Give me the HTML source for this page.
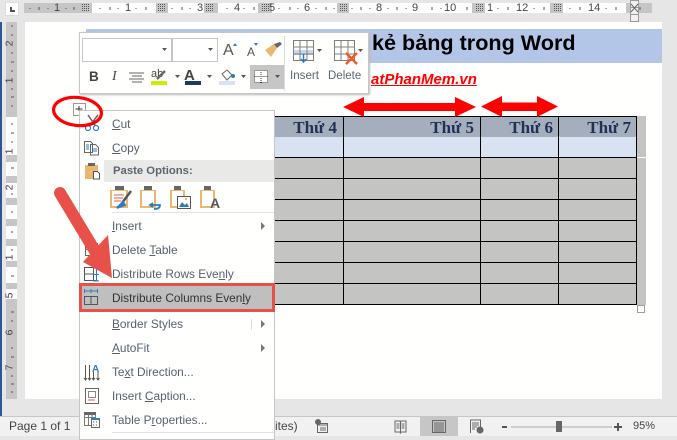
<!DOCTYPE html>
<html><head><meta charset="utf-8">
<style>
html,body{margin:0;padding:0}
body{width:677px;height:436px;position:relative;overflow:hidden;background:#e6e6e6;font-family:"Liberation Sans",sans-serif}
.a{position:absolute}
.t{position:absolute;white-space:nowrap;font-size:11.85px;line-height:14px;color:#566170}
.t u{text-decoration-thickness:1px;text-underline-offset:1px}
.th{position:absolute;top:117px;height:20px;font:bold 17px/22px "Liberation Serif",serif;color:#1f3157;text-align:right;white-space:nowrap}
.rn{position:absolute;top:3px;font-size:11px;line-height:11px;color:#444}
.rv{position:absolute;left:7px;font-size:10.500px;line-height:11px;color:#444;transform:rotate(-90deg)}
svg{position:absolute;left:0;top:0}
</style></head><body>
<!-- page -->
<div class="a" style="left:25px;top:22px;width:637px;height:377px;background:#fffffd"></div>
<div class="a" style="left:86px;top:29px;width:576px;height:34px;background:#b4c6e7"></div>
<div class="a" style="left:372px;top:28px;font:bold 21.6px/30px 'Liberation Sans',sans-serif;color:#000;white-space:nowrap">kẻ bảng trong Word</div>
<div class="a" style="left:371px;top:71px;font:italic bold 15px/18px 'Liberation Sans',sans-serif;color:#f00;text-decoration:underline;white-space:nowrap">atPhanMem.vn</div>
<!-- ruler top -->
<div class="a" style="left:5px;top:2px;width:14px;height:14px;background:#fff;border:1px solid #dcdcdc;box-sizing:border-box"></div>
<div class="a" style="left:10px;top:7px;width:5px;height:5px;border-left:2px solid #555;border-bottom:2px solid #555;box-sizing:border-box"></div>
<div class="a" style="left:24px;top:3px;width:628px;height:10px;background:#fff"></div>
<div class="a" style="left:24px;top:3px;width:68px;height:10px;background:#c6c6c6"></div>
<div class="a" style="left:156px;top:3px;width:12px;height:10px;background:#c6c6c6"></div>
<div class="a" style="left:204px;top:3px;width:14px;height:10px;background:#c6c6c6"></div>
<div class="a" style="left:258px;top:3px;width:14px;height:10px;background:#c6c6c6"></div>
<div class="a" style="left:337px;top:3px;width:12px;height:10px;background:#c6c6c6"></div>
<div class="a" style="left:472px;top:3px;width:13px;height:10px;background:#c6c6c6"></div>
<div class="a" style="left:550px;top:3px;width:13px;height:10px;background:#c6c6c6"></div>
<div class="a" style="left:626px;top:3px;width:26px;height:10px;background:#c6c6c6"></div>
<span class="rn" style="left:54px">1</span><span class="rn" style="left:125px">1</span><span class="rn" style="left:197px">3</span>
<span class="rn" style="left:234px">4</span><span class="rn" style="left:269px">5</span><span class="rn" style="left:304px">6</span><span class="rn" style="left:376px">8</span><span class="rn" style="left:412px">9</span>
<span class="rn" style="left:444px">10</span><span class="rn" style="left:487px">1</span><span class="rn" style="left:516px">12</span><span class="rn" style="left:588px">14</span>
<svg width="677" height="436" viewBox="0 0 677 436">
<defs><pattern id="g" width="2" height="2" patternUnits="userSpaceOnUse"><rect width="2" height="2" fill="#c6c6c6"/><rect width="1" height="1" fill="#555"/></pattern></defs>
<g fill="url(#g)"><rect x="82" y="4" width="8" height="8"/><rect x="158" y="4" width="8" height="8"/><rect x="206" y="4" width="8" height="8"/><rect x="261" y="4" width="8" height="8"/><rect x="339" y="4" width="8" height="8"/><rect x="475" y="4" width="8" height="8"/><rect x="553" y="4" width="8" height="8"/></g>
<path d="M30 8v1M39 7v3M48 8v1M66 8v1M74 7v3M100 8v1M110 7v3M118 8v1M136 8v1M146 7v3M172 8v1M182 7v3M190 8v1M227 8v1M244 8v1M254 7v3M279 8v1M290 7v3M298 8v1M316 8v1M326 7v3M334 8v1M352 8v1M361 7v3M370 8v1M388 8v1M397 7v3M406 8v1M432 7v3M441 8v1M467 7v3M498 8v1M508 7v3M534 8v1M544 7v3M570 8v1M580 7v3M606 8v1M616 7v3M640 7v3" stroke="#555" fill="none"/>
<rect x="630.500" y="0.500" width="8" height="7" fill="#f2f2f2" stroke="#999"/>
<rect x="630.500" y="7.500" width="8" height="7" fill="#f2f2f2" stroke="#999"/><rect x="630.500" y="14.500" width="8" height="7" fill="#f2f2f2" stroke="#999"/>
<path d="M631 4l7 8M638 4l-7 8" stroke="#666" fill="none"/>
</svg>
<!-- left ruler -->
<div class="a" style="left:6px;top:22px;width:11px;height:377px;background:#fff"></div>
<div class="a" style="left:6px;top:22px;width:11px;height:95px;background:#c6c6c6"></div>
<div class="a" style="left:6px;top:155px;width:11px;height:7px;background:#c6c6c6"></div>
<div class="a" style="left:6px;top:176px;width:11px;height:7px;background:#c6c6c6"></div>
<div class="a" style="left:6px;top:198px;width:11px;height:7px;background:#c6c6c6"></div>
<div class="a" style="left:6px;top:219px;width:11px;height:7px;background:#c6c6c6"></div>
<div class="a" style="left:6px;top:239px;width:11px;height:7px;background:#c6c6c6"></div>
<div class="a" style="left:6px;top:261px;width:11px;height:6px;background:#c6c6c6"></div>
<div class="a" style="left:6px;top:283px;width:11px;height:6px;background:#c6c6c6"></div>
<div class="a" style="left:6px;top:299px;width:11px;height:100px;background:#c6c6c6"></div>
<div class="a" style="left:0;top:22px;width:2px;height:394px;background:#2b579a"></div>
<svg width="677" height="436" viewBox="0 0 677 436">
<path d="M11 26h2M11 35h2M11 53h2M11 62h3M11 71h2M11 89h2M11 97h3M11 106h2M11 124h2M11 133h3M11 142h2M11 168h3M11 194h2M11 212h2M11 232h2M11 250h2M11 276h3M11 312h3M11 321h2M11 348h2M11 357h3M11 376h2M11 384h3M11 392h2" stroke="#555"/>
</svg>
<span class="rv" style="left:7px;top:38px">2</span>
<span class="rv" style="top:75px">1</span>
<span class="rv" style="top:146px">1</span>
<span class="rv" style="top:182px">2</span>
<span class="rv" style="top:252px">1</span>
<span class="rv" style="top:290px">5</span>
<span class="rv" style="top:327px">6</span>
<span class="rv" style="top:362px">7</span>
<!-- table -->
<div class="a" style="left:270px;top:116px;width:376px;height:189px;background:#c4c4c2"></div>
<div class="a" style="left:270px;top:117px;width:367px;height:20px;background:#a5aebd"></div>
<div class="a" style="left:270px;top:137px;width:367px;height:20px;background:#d9e2f3"></div>
<svg width="677" height="436" viewBox="0 0 677 436">
<path d="M270 116.500H637M270 157.500H637M270 178.500H637M270 199.500H637M270 220.500H637M270 241.500H637M270 262.500H637M270 283.500H637M270 304.500H637M343.500 116V305M480.500 116V305M558.500 116V305M636.500 116V305" stroke="#000" fill="none"/>
<path d="M637 157.500h9" stroke="#fffffd"/>
<rect x="637.500" y="305.500" width="7" height="7" fill="#fffffd" stroke="#a0a0a0"/>
<!-- arrows -->
<path d="M343 107L364 97V103H455V97L476 107 455 117V111H364V117Z" fill="#f00"/>
<path d="M481 106.500L502 96V102.500H537V96L558 106.500 537 117V111H502V117Z" fill="#f00"/>
</svg>
<div class="th" style="left:270px;width:67px">Thứ 4</div>
<div class="th" style="left:345px;width:129px">Thứ 5</div>
<div class="th" style="left:482px;width:71px">Thứ 6</div>
<div class="th" style="left:560px;width:71px">Thứ 7</div>
<!-- status bar -->
<div class="a" style="left:0;top:416px;width:677px;height:20px;background:#f1f1f1;border-top:1px solid #c6c6c6;box-sizing:border-box"></div>
<div class="a" style="left:420px;top:417px;width:38px;height:19px;background:#c6c6c6"></div>
<div class="t" style="left:9px;top:419px;color:#444;font-size:12px">Page 1 of 1</div>
<div class="t" style="left:275px;top:419px;color:#444;font-size:12px">ites)</div>
<div class="t" style="left:633px;top:419px;color:#444;font-size:11px">95%</div>
<svg width="677" height="436" viewBox="0 0 677 436">
<g fill="none" stroke="#666">
<rect x="317.500" y="423.500" width="10" height="9"/><path d="M317 425h11M320 428h6M320 430h6"/>
<circle cx="318" cy="422" r="2.500" fill="#666"/>
<path d="M395 421h5l.5 1 .5-1h5v11h-5l-.5 1-.5-1h-5zM400.500 422v10M396.500 424h3M396.500 426h3M396.500 428h3M401.500 424h3M401.500 426h3M401.500 428h3"/>
<rect x="432.500" y="420.500" width="13" height="12"/><path d="M434 423h10M434 425h10M434 427h10M434 429h10M434 431h10"/>
<path d="M470.500 433v-13h10v7M472 423h7M472 425h7M472 427h5M472 429h3"/><circle cx="480" cy="430" r="3" fill="#666"/>
</g>
<path d="M502 427h5" stroke="#555" stroke-width="2"/><path d="M511 427h101" stroke="#aaa"/>
<rect x="556" y="421" width="6" height="11" fill="#666"/>
<path d="M614 427h8M618 423v8" stroke="#555" stroke-width="2"/>
<!-- table move handle (under menu) -->
<rect x="73.500" y="103.500" width="12" height="12" fill="#fffffd" stroke="#999"/>
<path d="M75.500 109h7M79 106v5" stroke="#333"/>
</svg>
<!-- menu -->
<div class="a" style="left:79px;top:110px;width:196px;height:330px;background:#fffffd;border:1px solid #c6c6c6;box-sizing:border-box"></div>
<div class="a" style="left:104px;top:160px;width:170px;height:22px;background:#e9e9e7"></div>
<div class="a" style="left:112px;top:212px;width:162px;height:1px;background:#dfe3e8"></div>
<div class="a" style="left:112px;top:432px;width:162px;height:1px;background:#dfe3e8"></div>
<div class="a" style="left:79px;top:283px;width:196px;height:29px;background:#bfbfbf;border:3px solid #e8504a;box-sizing:border-box"></div>
<div class="t" style="left:112px;top:117px"><u>C</u>ut</div>
<div class="t" style="left:112px;top:141px"><u>C</u>opy</div>
<div class="t" style="left:113px;top:164px;font-weight:bold;font-size:11.300px;color:#5d6570">Paste Options:</div>
<div class="t" style="left:112px;top:219px"><u>I</u>nsert</div>
<div class="t" style="left:112px;top:243px">Delete <u>T</u>able</div>
<div class="t" style="left:112px;top:267px">Distribute Rows Eve<u>n</u>ly</div>
<div class="t" style="left:112px;top:291px;color:#333">Distribute Columns Even<u>l</u>y</div>
<div class="t" style="left:112px;top:317px"><u>B</u>order Styles</div>
<div class="t" style="left:112px;top:341px"><u>A</u>utoFit</div>
<div class="t" style="left:112px;top:365px">Te<u>x</u>t Direction...</div>
<div class="t" style="left:112px;top:389px">Insert <u>C</u>aption...</div>
<div class="t" style="left:112px;top:413px">Table P<u>r</u>operties...</div>
<svg width="677" height="436" viewBox="0 0 677 436">
<!-- submenu arrows -->
<path d="M261 222l4 4-4 4zM261 320l4 4-4 4zM261 344l4 4-4 4z" fill="#777"/>
<path d="M251.500 319v11" stroke="#ddd"/>
<!-- cut -->
<path d="M88 115l9 13M98 115l-10 13" stroke="#666" fill="none" stroke-width="1.500"/>
<circle cx="88" cy="128" r="2.500" fill="#fffffd" stroke="#2f7bc0" stroke-width="1.200"/><circle cx="96" cy="128" r="2.500" fill="#fffffd" stroke="#2f7bc0" stroke-width="1.200"/>
<!-- copy -->
<path d="M84.500 141.500h6l2 2v9h-8zM90.500 144.500h5l3 3v7.500h-8z" fill="#fffffd" stroke="#666"/><path d="M86 145h3M86 147h3M86 149h3M92 149h5M92 151h5" stroke="#2f7bc0"/>
<!-- paste -->
<path d="M85 165h13v14H85z" fill="#e8b870"/><rect x="88" y="163" width="7" height="3" fill="#666"/>
<path d="M93.500 171.500h4l2 2v5.500h-6z" fill="#fffffd" stroke="#555"/>
<!-- paste option icons -->
<g>
<path d="M110 190h18v18h-18z" fill="#e8b870"/><rect x="112" y="191" width="14" height="15" fill="#fffffd"/><rect x="115" y="186" width="9" height="4" fill="#666"/>
<path d="M114 195h10M114 198h9M114 201h7" stroke="#e2584a"/>
<path d="M131 191l-9 12" stroke="#555" stroke-width="2.500"/><path d="M117 208l6-6 2 3z" fill="#2f7bc0" stroke="#2f7bc0" stroke-width="2"/>
<path d="M140 190h16v18h-16z" fill="#e8b870"/><rect x="142" y="191" width="12" height="15" fill="#fffffd"/><rect x="144" y="186" width="8" height="4" fill="#666"/>
<path d="M150 205h10q0 4-6 4M153 203l-3 2 3 2" fill="none" stroke="#2f7bc0" stroke-width="1.800"/>
<path d="M170 190h15v18h-15z" fill="#e8b870"/><rect x="172" y="191" width="11" height="15" fill="#fffffd"/><rect x="174" y="186" width="7" height="4" fill="#666"/>
<rect x="177.500" y="196.500" width="13" height="12" fill="#fffffd" stroke="#555"/><path d="M179 207l3-5 3 3 2-2 2 4z" fill="#2f7bc0"/><circle cx="186" cy="199" r="1" fill="#e8a040"/>
<path d="M200 190h15v18h-15z" fill="#e8b870"/><rect x="202" y="191" width="11" height="15" fill="#fffffd"/><rect x="204" y="186" width="7" height="4" fill="#666"/>
</g>
<text x="210" y="208" font-family="Liberation Sans,sans-serif" font-weight="bold" font-size="14" fill="#555" stroke="#fffffd" stroke-width=".5" paint-order="stroke">A</text>
<!-- delete table -->
<path d="M85.500 243.500h12v12h-12zM85.500 249.500h12" stroke="#666" fill="none"/>
<!-- distribute rows -->
<path d="M84.500 267.500h9v13h-9zM84.500 274h9" fill="#fffffd" stroke="#555"/>
<path d="M84.500 267.500h13M84.500 280.500h13" stroke="#555" fill="none"/>
<path d="M93 268h6M93 281h6M96.500 268v13M93 274.500h6" stroke="#2f7bc0" fill="none"/>
<!-- distribute cols -->
<path d="M84 291h14M84.500 289v4M91 289v4M97.500 289v4" stroke="#2f7bc0" fill="none"/>
<path d="M84.500 296.500h13v8h-13zM91 296.500v8" stroke="#555" fill="none"/>
<!-- text dir -->
<path d="M85.500 365v14M89.500 365v14M93.500 372v7M98 372v7" stroke="#555" fill="none"/><path d="M84 378l1.500 2 1.500-2M88 378l1.500 2 1.500-2M92 378l1.500 2 1.500-2M96.500 378l1.500 2 1.500-2" stroke="#555" fill="none"/>
<text x="92" y="372" font-family="Liberation Sans,sans-serif" font-weight="bold" font-size="10" fill="#2f7bc0">A</text>
<!-- caption -->
<rect x="85.500" y="388.500" width="13" height="15" fill="#fffffd" stroke="#666"/><rect x="88.500" y="391.500" width="7" height="6" fill="none" stroke="#888"/><path d="M88 400h7" stroke="#e2584a"/>
<!-- table props -->
<path d="M84.500 413.500h11v12h-11zM84.500 417.500h11M88.500 414v12M92 414v5" stroke="#777" fill="#fffffd"/><rect x="84" y="412" width="12" height="3" fill="#666"/>
<rect x="91.500" y="418.500" width="8" height="9" fill="#fffffd" stroke="#666"/><rect x="91" y="418" width="9" height="2" fill="#2f7bc0"/><path d="M93 422h1M96 422h1M93 425h1M96 425h1" stroke="#555"/>
</svg>
<!-- mini toolbar -->
<div class="a" style="left:79px;top:32px;width:290px;height:62px;background:#fffffd;border:1px solid #c6c6c6;box-shadow:1px 1px 2px #bbb;box-sizing:border-box"></div>
<div class="a" style="left:82px;top:38px;width:90px;height:24px;border:1px solid #c6c6c6;box-sizing:border-box;background:#fff"></div>
<div class="a" style="left:172px;top:38px;width:46px;height:24px;border:1px solid #c6c6c6;box-sizing:border-box;background:#fff"></div>
<div class="a" style="left:250px;top:65px;width:34px;height:24px;background:#c6c6c6"></div>
<div class="a" style="left:284px;top:36px;width:1px;height:55px;background:#ddd"></div>
<div class="a" style="left:89px;top:69px;font:bold 13.500px/16px 'Liberation Sans',sans-serif;color:#444">B</div>
<div class="a" style="left:112px;top:69px;font:italic 14px/16px 'Liberation Serif',serif;color:#444">I</div>
<div class="a" style="left:223px;top:42px;font:16px/18px 'Liberation Sans',sans-serif;color:#555">A</div>
<div class="a" style="left:247px;top:45px;font:12px/14px 'Liberation Sans',sans-serif;color:#555">A</div>
<div class="a" style="left:290px;top:69px;font:11.600px/14px 'Liberation Sans',sans-serif;color:#5a6672">Insert</div>
<div class="a" style="left:328px;top:69px;font:11.500px/14px 'Liberation Sans',sans-serif;color:#5a6672">Delete</div>
<div class="a" style="left:151px;top:68px;font:11px/12px 'Liberation Sans',sans-serif;color:#444">ab</div>
<div class="a" style="left:184px;top:68px;font:bold 15px/15px 'Liberation Sans',sans-serif;color:#444">A</div>
<svg width="677" height="436" viewBox="0 0 677 436">
<path d="M162 48h5l-2.500 3zM208 48h5l-2.500 3zM175 75h5l-2.500 3zM207 75h5l-2.500 3zM241 75h5l-2.500 3zM275 75h5l-2.500 3zM317 49h5l-2.500 3zM358 49h5l-2.500 3z" fill="#555"/>
<path d="M233 46l2-3 2 3z" fill="#2f7bc0"/><path d="M254 43l2 3 2-3z" fill="#2f7bc0"/>
<!-- brush -->
<path d="M265 50l9-6 3 4-6 9z" fill="#e8b870"/><path d="M274 44l6-2 2 2-5 4z" fill="#666"/>
<!-- align -->
<path d="M129 73h15M132 76h10M129 79h15M132 82h10" stroke="#666" fill="none"/>
<!-- highlight -->
<rect x="151" y="81" width="16" height="4" fill="#c8f000"/><path d="M157 79l8-8" stroke="#666" stroke-width="2.500"/>
<rect x="185" y="81" width="16" height="4" fill="#1f3864"/>
<!-- shading -->
<rect x="219" y="81" width="16" height="4" fill="#d9e2f3"/>
<path d="M222 74l5-4 5 5-5 5z" fill="#fffffd" stroke="#666"/><circle cx="233" cy="76" r="2" fill="#2f7bc0"/>
<!-- border -->
<rect x="254" y="70" width="14" height="13" fill="#fffffd"/>
<path d="M254.500 70.500h13v12h-13zM254.500 76.500h13M261 70v13" fill="none" stroke="#333" stroke-dasharray="1 1" shape-rendering="crispEdges"/>
<!-- insert table -->
<rect x="294" y="50" width="19" height="5" fill="#c5d8ee"/>
<path d="M293.500 40.500h20v20h-20zM293.500 47h20M293.500 54h20M300 40v20M307 40v20" fill="none" stroke="#808080"/>
<path d="M303.500 54v7M301 59l2.500 3 2.500-3" stroke="#2f7bc0" fill="none" stroke-width="1.500"/>
<!-- delete table -->
<path d="M334.500 40.500h20v20h-20zM334.500 47h20M334.500 54h20M341 40v20M348 40v20" fill="#fffffd" stroke="#808080"/>
<path d="M346 53l11 11M357 53l-11 11" stroke="#f05a28" stroke-width="2.500"/>
<!-- red annotation ellipse -->
<ellipse cx="77.500" cy="111.500" rx="24" ry="14" fill="none" stroke="#f00" stroke-width="3.200" transform="rotate(6 77.500 111.500)"/>
<!-- big red arrow -->
<path d="M60 193L101 261" stroke="#e8504a" stroke-width="12" stroke-linecap="round"/>
<path d="M83 262L108 235L112 278Z" fill="#e8504a"/>
</svg>
</body></html>
